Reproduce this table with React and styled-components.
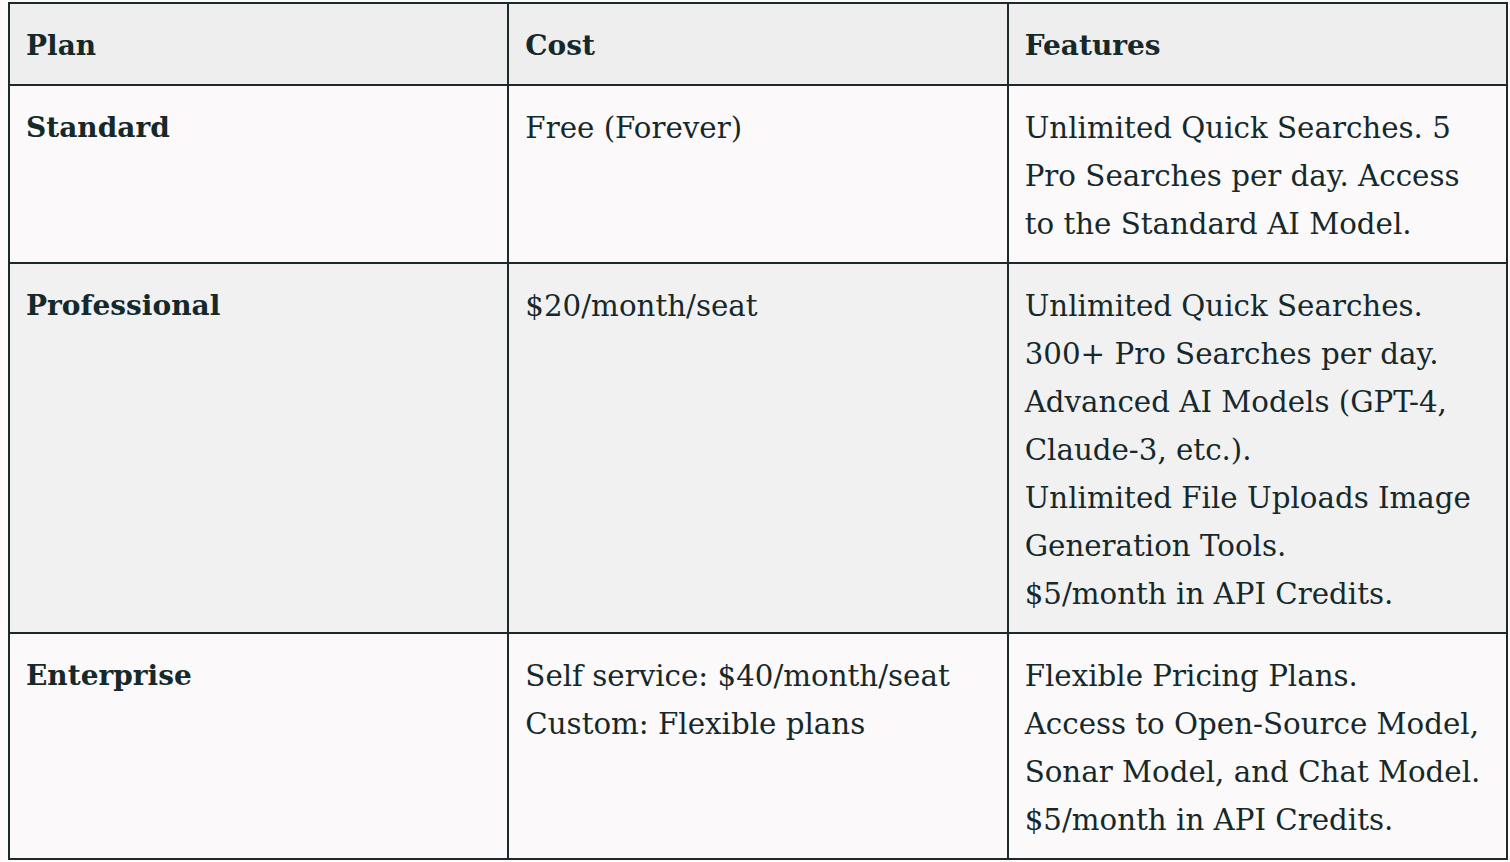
import React from 'react';
import styled, { createGlobalStyle } from 'styled-components';

const GlobalStyle = createGlobalStyle`
  body {
    margin: 2px 0 0 8px;
    background: #fcfafb;
    font-family: "DejaVu Serif", "Liberation Serif", serif;
    color: #15292a;
  }
`;

const Table = styled.table`
  width: 1500px;
  table-layout: fixed;
  border-collapse: collapse;
  border: 2px solid #1c2a2b;
  font-size: 29px;
  line-height: 48px;
`;

const HeadCell = styled.th`
  text-align: left;
  font-weight: 700;
  font-size: 28px;
  padding: 18px 16px 14px;
  border: 2px solid #1c2a2b;
  background: #efeeef;
  vertical-align: top;
`;

const Row = styled.tr`
  background: ${(p) => (p.$shaded ? '#f2f1f2' : '#fbf9fa')};
`;

const Cell = styled.td`
  padding: 18px 16px 14px;
  border: 2px solid #1c2a2b;
  vertical-align: top;
  white-space: nowrap;
  font-weight: ${(p) => (p.$bold ? 700 : 400)};
  font-size: ${(p) => (p.$bold ? '28px' : '29.3px')};
`;

const Line = styled.div``;

const plans = [
  {
    name: 'Standard',
    cost: ['Free (Forever)'],
    features: [
      'Unlimited Quick Searches. 5',
      'Pro Searches per day. Access',
      'to the Standard AI Model.',
    ],
  },
  {
    name: 'Professional',
    cost: ['$20/month/seat'],
    features: [
      'Unlimited Quick Searches.',
      '300+ Pro Searches per day.',
      'Advanced AI Models (GPT-4,',
      'Claude-3, etc.).',
      'Unlimited File Uploads Image',
      'Generation Tools.',
      '$5/month in API Credits.',
    ],
  },
  {
    name: 'Enterprise',
    cost: ['Self service: $40/month/seat', 'Custom: Flexible plans'],
    features: [
      'Flexible Pricing Plans.',
      'Access to Open-Source Model,',
      'Sonar Model, and Chat Model.',
      '$5/month in API Credits.',
    ],
  },
];

export default function App() {
  return (
    <>
      <GlobalStyle />
      <Table>
        <thead>
          <tr>
            <HeadCell>Plan</HeadCell>
            <HeadCell>Cost</HeadCell>
            <HeadCell>Features</HeadCell>
          </tr>
        </thead>
        <tbody>
          {plans.map((plan, i) => (
            <Row key={plan.name} $shaded={i % 2 === 1}>
              <Cell $bold>{plan.name}</Cell>
              <Cell>
                {plan.cost.map((c) => (
                  <Line key={c}>{c}</Line>
                ))}
              </Cell>
              <Cell>
                {plan.features.map((f) => (
                  <Line key={f}>{f}</Line>
                ))}
              </Cell>
            </Row>
          ))}
        </tbody>
      </Table>
    </>
  );
}
